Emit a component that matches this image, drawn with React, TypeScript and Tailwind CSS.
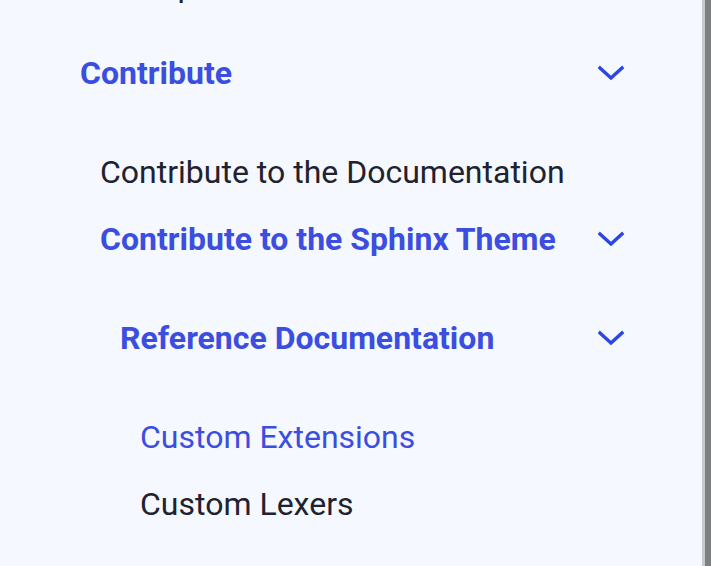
import React from 'react';

const Chevron = () => (
  <svg width="26" height="16" viewBox="0 0 26 16" fill="none" className="text-[#2b45e6]">
    <path d="M2 3l11 10 11-10" stroke="currentColor" strokeWidth="3.4" strokeLinecap="square" />
  </svg>
);

const Row = ({
  label,
  kind,
  indent,
  chevron,
}: {
  label: string;
  kind: 'head' | 'link' | 'current';
  indent: string;
  chevron?: boolean;
}) => {
  const tone =
    kind === 'head'
      ? 'font-bold text-[#3b4ee0]'
      : kind === 'current'
      ? 'text-[#3b4ee0]'
      : 'text-[#20222f]';
  return (
    <div className={`flex h-[67px] items-center justify-between ${indent}`}>
      <span className={`text-[32px] leading-[40px] ${tone}`}>{label}</span>
      {chevron && (
        <span className="flex w-[26px] items-center justify-center">
          <Chevron />
        </span>
      )}
    </div>
  );
};

export default function App() {
  return (
    <div
      className="flex h-[566px] w-[711px] overflow-hidden bg-[#f5f8ff]"
      style={{ fontFamily: 'Roboto, "Liberation Sans", sans-serif' }}
    >
      <nav className="flex-1 overflow-hidden pl-[80px] pr-[78px]">
        <div className="-mt-[48px]">
          <Row label="Help" kind="link" indent="pl-[50px]" />
        </div>
        <div className="mt-[20px]">
          <Row label="Contribute" kind="head" indent="pl-0" chevron />
          <ul className="pt-[32px]">
            <li>
              <Row label="Contribute to the Documentation" kind="link" indent="pl-[20px]" />
            </li>
            <li>
              <Row label="Contribute to the Sphinx Theme" kind="head" indent="pl-[20px]" chevron />
              <ul className="pt-[32px]">
                <li>
                  <Row label="Reference Documentation" kind="head" indent="pl-[40px]" chevron />
                  <ul className="pt-[32px]">
                    <li>
                      <Row label="Custom Extensions" kind="current" indent="pl-[60px]" />
                    </li>
                    <li>
                      <Row label="Custom Lexers" kind="link" indent="pl-[60px]" />
                    </li>
                  </ul>
                </li>
              </ul>
            </li>
          </ul>
        </div>
      </nav>
      <div className="flex h-full w-[9px]">
        <div className="w-[3px] bg-[#c9c9cc]" />
        <div className="flex-1 bg-[#7d8080]" />
      </div>
    </div>
  );
}
